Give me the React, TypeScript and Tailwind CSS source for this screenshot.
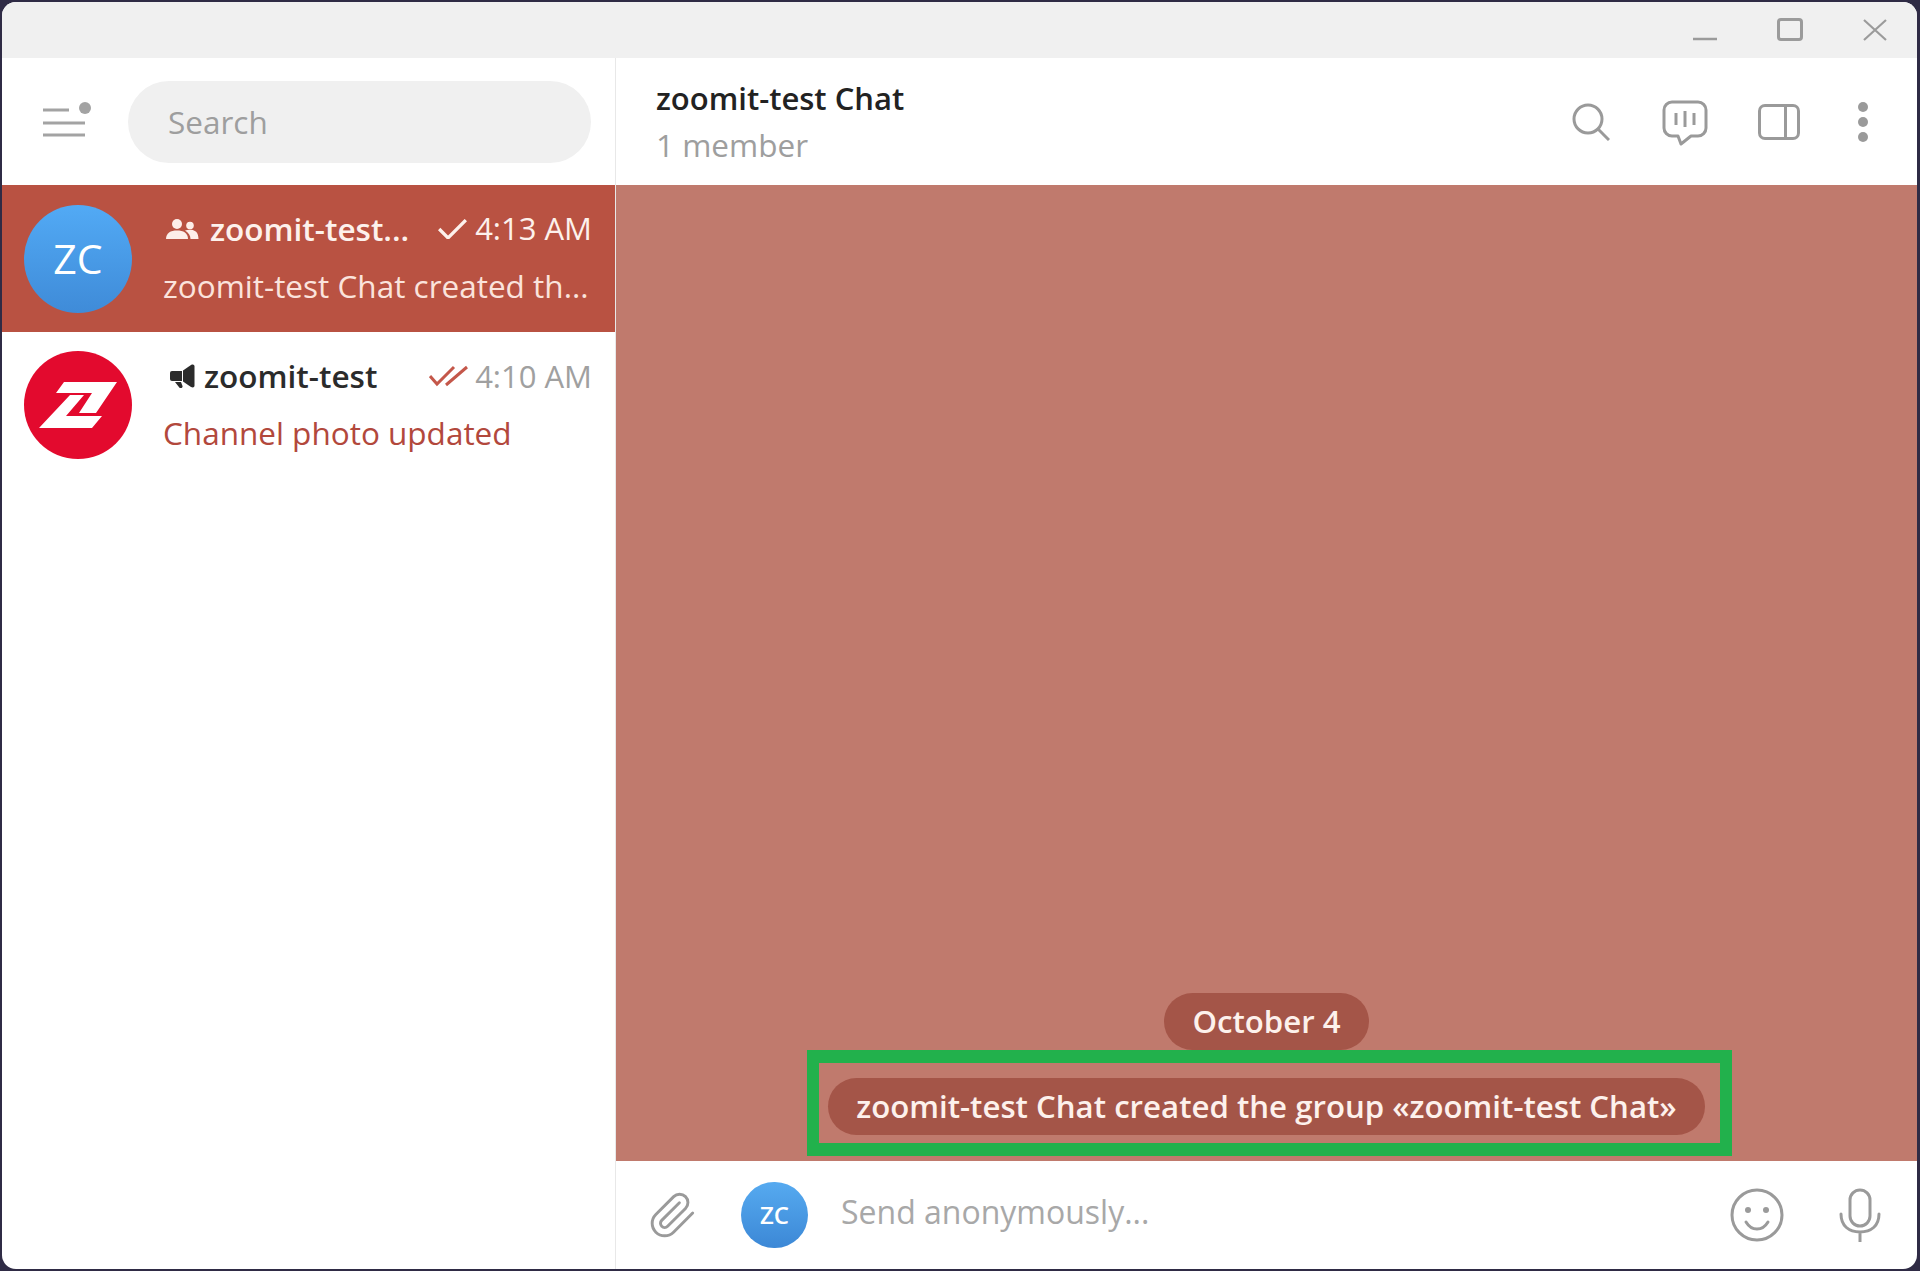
import React from 'react';

const GroupIcon = () => (
  <svg viewBox="0 0 34 22" className="w-[34px] h-[22px]" fill="#fdeee9">
    <circle cx="12" cy="6" r="5" />
    <path d="M1 21c0-6 4.500-8.500 11-8.500S23 15 23 21z" />
    <circle cx="25" cy="7.500" r="3.800" />
    <path d="M20 12.500c1.500-.5 3-.7 5-.7 5 0 8.500 2.500 8.500 9.200H25.500c0-3.500-2-6.500-5.500-8.500z" />
  </svg>
);

const MegaphoneIcon = () => (
  <svg viewBox="0 0 26 24" className="w-[26px] h-[24px]" fill="#2b2b2b">
    <path d="M3 7h10v10H3a2 2 0 0 1-2-2V9a2 2 0 0 1 2-2z" />
    <path d="M14 6.500L22 1c2-1 3.500-.4 3.500 1.500v19c0 1.900-1.500 2.500-3.500 1.500l-8-5.500z" />
    <path d="M6 18h6l1.500 4a1.800 1.800 0 0 1-3.200 1.500z" />
  </svg>
);

const ZoomitLogo = () => (
  <div className="w-[108px] h-[108px] rounded-full bg-[#e30a2e] shrink-0">
    <svg viewBox="0 0 108 108" className="w-[108px] h-[108px]" fill="#ffffff">
      <path d="M40 31h53L72 62H55l13-20H32z" />
      <path d="M46 44h14L42 65h36L68 77H15z" />
    </svg>
  </div>
);

const ZcAvatar = ({ small }: { small?: boolean }) => (
  <div
    className={
      small
        ? 'w-[67px] h-[66px] rounded-full bg-gradient-to-b from-[#56aaf0] to-[#3c88d6] shrink-0 flex items-center justify-center text-white text-[24px] font-semibold'
        : 'w-[108px] h-[108px] rounded-full bg-gradient-to-b from-[#52aaf5] to-[#3f8bd8] shrink-0 flex items-center justify-center text-white text-[41px] font-medium'
    }
  >
    ZC
  </div>
);

const App = () => {
  return (
    <div className="w-[1920px] h-[1271px] bg-[#2f2b45] pt-[2px] pl-[2px] pr-[3px] pb-[2px] overflow-hidden">
      <div className="w-full h-full rounded-[14px] overflow-hidden bg-white flex flex-col font-['Open_Sans',sans-serif]">
        {/* title bar */}
        <div className="h-[56px] bg-[#f0f0f0] shrink-0 flex items-start justify-end">
          <svg viewBox="0 0 24 4" className="w-[24px] h-[4px] mt-[35px] mr-[60px]">
            <path d="M0 2h24" stroke="#9b9b9b" strokeWidth="2.500" />
          </svg>
          <div className="w-[26px] h-[23px] mt-[16px] mr-[60px] rounded-[4px] border-[3px] border-[#9b9b9b]" />
          <svg viewBox="0 0 24 22" className="w-[24px] h-[22px] mt-[17px] mr-[30px]" fill="none" stroke="#9b9b9b" strokeWidth="2.200">
            <path d="M1 1l22 20M23 1L1 21" />
          </svg>
        </div>

        <div className="flex-1 flex min-h-0">
          {/* sidebar */}
          <aside className="w-[614px] shrink-0 border-r border-[#e8e8e8] flex flex-col">
            <div className="h-[127px] shrink-0 flex items-center pl-[41px]">
              <svg viewBox="0 0 48 36" className="w-[48px] h-[36px] shrink-0 -mt-[3px]" fill="none" stroke="#a3a3a3" strokeWidth="3">
                <path d="M0 12h26M0 25h42M0 37h42" transform="translate(0 -4)" />
                <circle cx="42" cy="6" r="6" fill="#a3a3a3" stroke="none" />
              </svg>
              <div className="ml-[37px] w-[463px] h-[82px] rounded-full bg-[#f0f0f0] flex items-center pl-[40px] text-[31.500px] text-[#9e9e9e]">
                Search
              </div>
            </div>

            <div className="h-[147px] bg-[#b95242] flex items-center pl-[22px] pr-[23px] shrink-0">
              <ZcAvatar />
              <div className="ml-[31px] -mt-[3px] flex-1 min-w-0 flex flex-col gap-[17px]">
                <div className="flex items-center h-[40px] text-[31.500px] text-[#fdf1ec]">
                  <span className="ml-[2px]"><GroupIcon /></span>
                  <span className="ml-[11px] font-semibold">zoomit-test...</span>
                  <svg viewBox="0 0 26 18" className="w-[29px] h-[20px] ml-auto" fill="none" stroke="#fdf1ec" strokeWidth="3">
                    <path d="M1 9l8 8L25 1" />
                  </svg>
                  <span className="ml-[8px] text-[31px]">4:13 AM</span>
                </div>
                <div className="h-[40px] flex items-center text-[31.500px] text-[#fbe3dc] whitespace-nowrap">
                  zoomit-test Chat created th...
                </div>
              </div>
            </div>

            <div className="h-[146px] flex items-center pl-[22px] pr-[23px] shrink-0">
              <ZoomitLogo />
              <div className="ml-[31px] -mt-[1px] flex-1 min-w-0 flex flex-col gap-[17px]">
                <div className="flex items-center h-[40px] text-[31.500px]">
                  <span className="ml-[6px]"><MegaphoneIcon /></span>
                  <span className="ml-[9px] font-semibold text-[#2b2b2b]">zoomit-test</span>
                  <svg viewBox="0 0 40 22" className="w-[40px] h-[22px] ml-auto" fill="none" stroke="#c4574a" strokeWidth="3">
                    <path d="M1 11l7 8L25 2M17 20L38 2" />
                  </svg>
                  <span className="ml-[6px] text-[31px] text-[#a0a0a0]">4:10 AM</span>
                </div>
                <div className="h-[40px] flex items-center text-[31.500px] text-[#b2483c] whitespace-nowrap">
                  Channel photo updated
                </div>
              </div>
            </div>
          </aside>

          {/* chat */}
          <main className="flex-1 min-w-0 flex flex-col">
            <header className="h-[127px] shrink-0 flex items-center pl-[40px]">
              <div className="flex flex-col gap-[9px]">
                <div className="text-[31px] leading-[38px] font-semibold text-[#222222]">zoomit-test Chat</div>
                <div className="text-[31.500px] leading-[38px] text-[#9e9e9e]">1 member</div>
              </div>
              <svg viewBox="0 0 38 38" className="w-[38px] h-[38px] ml-auto" fill="none" stroke="#9a9a9a" strokeWidth="3">
                <circle cx="16" cy="16" r="14" />
                <path d="M26 26l11 11" />
              </svg>
              <svg viewBox="0 0 46 46" className="w-[46px] h-[46px] ml-[52px] mt-[2px]" fill="none" stroke="#9a9a9a" strokeWidth="3">
                <path d="M10 2h26a8 8 0 0 1 8 8v18a8 8 0 0 1-8 8h-7l-10 8-3-8h-6a8 8 0 0 1-8-8V10a8 8 0 0 1 8-8z" strokeLinejoin="round" />
                <path d="M14 13v12M23 11v16M32 13v12" />
              </svg>
              <div className="w-[42px] h-[36px] ml-[50px] rounded-[7px] border-[3px] border-[#9a9a9a] flex justify-end">
                <div className="w-[13px] h-full border-l-[3px] border-[#9a9a9a]" />
              </div>
              <div className="ml-[58px] mr-[49px] flex flex-col gap-[5px]">
                <div className="w-[10px] h-[10px] rounded-full bg-[#9a9a9a]" />
                <div className="w-[10px] h-[10px] rounded-full bg-[#9a9a9a]" />
                <div className="w-[10px] h-[10px] rounded-full bg-[#9a9a9a]" />
              </div>
            </header>

            <div className="flex-1 min-h-0 bg-[#c07a6d] flex flex-col items-center justify-end pb-[5px]">
              <div className="h-[57px] px-[28px] rounded-full bg-[#a45548] flex items-center text-[31.200px] font-semibold text-[#fdf1ec]">
                October 4
              </div>
              <div className="w-[925px] h-[106px] border-x-[12px] border-y-[13px] border-[#22b14c] flex items-center justify-center ml-[6px]">
                <div className="h-[57px] w-[877px] -ml-[6px] mt-[6px] shrink-0 rounded-full bg-[#a45548] flex items-center justify-center text-[31.200px] font-semibold text-[#fdf1ec] whitespace-nowrap">
                  zoomit-test Chat created the group «zoomit-test Chat»
                </div>
              </div>
            </div>

            <footer className="h-[108px] shrink-0 flex items-center pl-[32px] pr-[36px]">
              <svg viewBox="0 0 24 24" className="w-[50px] h-[50px] shrink-0" fill="none" stroke="#9a9a9a" strokeWidth="1.400" strokeLinecap="round" strokeLinejoin="round">
                <path d="M21.440 11.050l-9.190 9.190a6 6 0 0 1-8.490-8.490l8.570-8.570A4 4 0 1 1 18 8.840l-8.590 8.570a2 2 0 0 1-2.830-2.830l8.490-8.480" />
              </svg>
              <div className="ml-[43px]"><ZcAvatar small /></div>
              <div className="ml-[33px] -mt-[7px] text-[32px] text-[#a8a8a8] whitespace-nowrap">Send anonymously...</div>
              <svg viewBox="0 0 54 54" className="w-[54px] h-[54px] ml-auto shrink-0" fill="none" stroke="#9a9a9a" strokeWidth="3">
                <circle cx="27" cy="27" r="25" />
                <circle cx="18" cy="22" r="3" fill="#9a9a9a" stroke="none" />
                <circle cx="36" cy="22" r="3" fill="#9a9a9a" stroke="none" />
                <path d="M16 34c3 5 7 7 11 7s8-2 11-7" strokeLinecap="round" />
              </svg>
              <svg viewBox="0 0 42 54" className="w-[42px] h-[54px] ml-[55px] shrink-0" fill="none" stroke="#9a9a9a" strokeWidth="3">
                <rect x="11" y="2" width="20" height="36" rx="10" />
                <path d="M2 26c0 12 8 18 19 18s19-6 19-18M21 44v10" strokeLinecap="round" />
              </svg>
            </footer>
          </main>
        </div>
      </div>
    </div>
  );
};

export default App;
